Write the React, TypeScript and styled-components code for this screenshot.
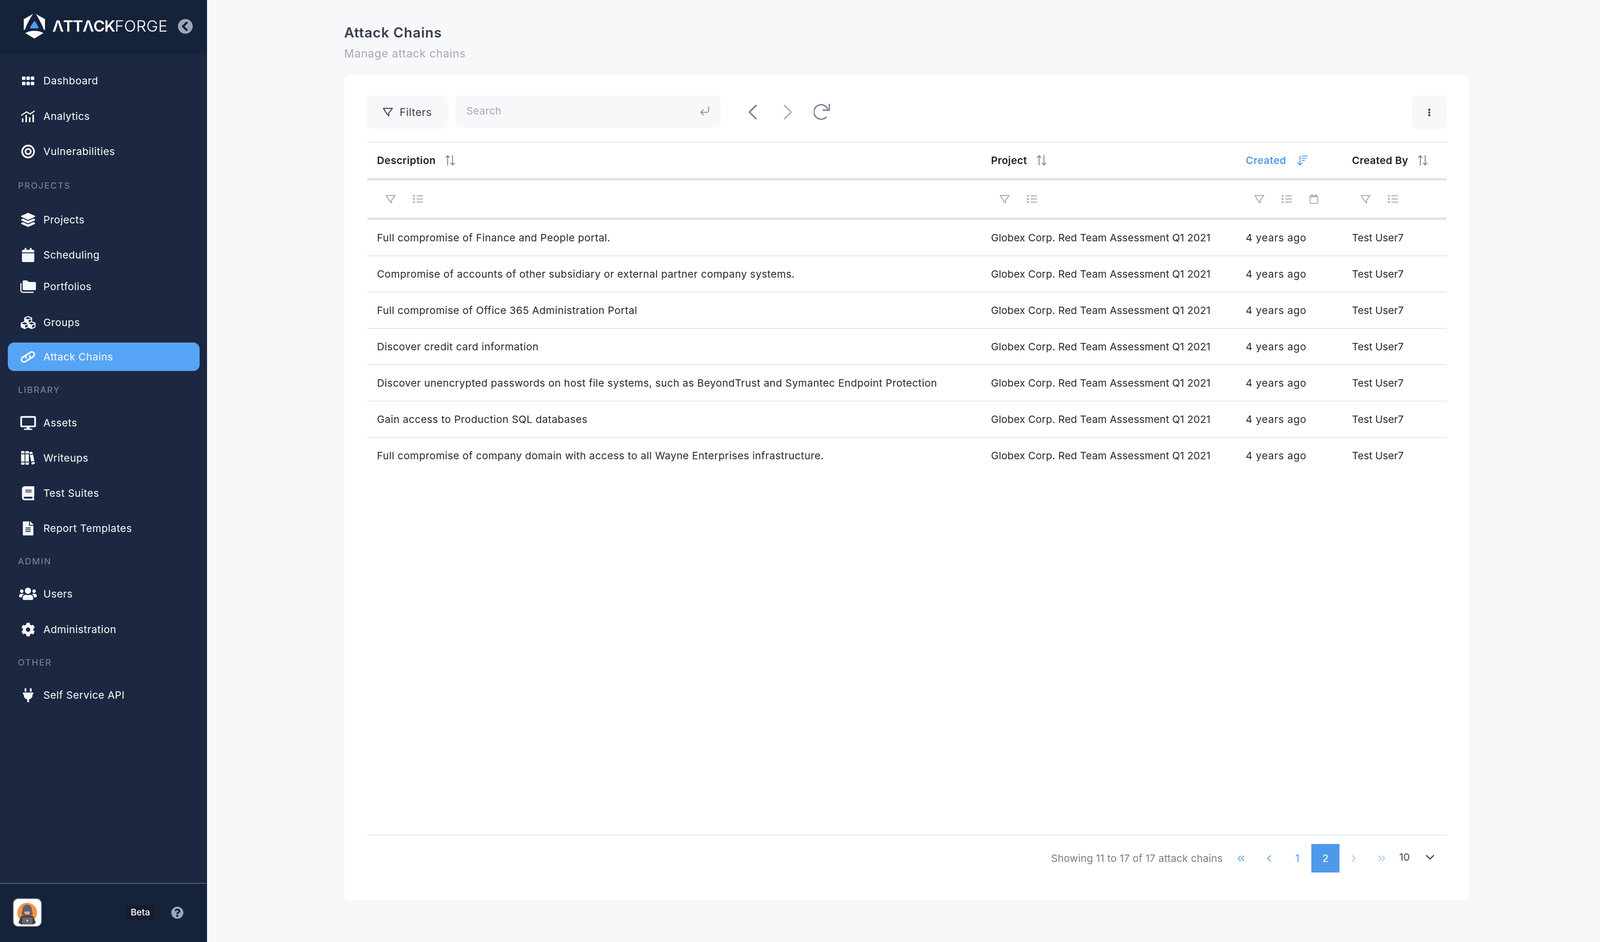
import React from 'react'
import styled, { createGlobalStyle } from 'styled-components'
import {
  FaBook,
  FaBullseye,
  FaCalendar,
  FaChevronCircleLeft,
  FaCog,
  FaCubes,
  FaDesktop,
  FaEllipsisV,
  FaFileAlt,
  FaGripHorizontal,
  FaLayerGroup,
  FaPlug,
  FaQuestionCircle,
  FaRegCalendar,
  FaUsers,
} from 'react-icons/fa'
import {
  FiChevronDown,
  FiChevronLeft,
  FiChevronRight,
  FiChevronsLeft,
  FiChevronsRight,
  FiCornerDownLeft,
} from 'react-icons/fi'
import { ArrowDownWideNarrow } from 'lucide-react'

const GlobalStyle = createGlobalStyle`
  html, body {
    margin: 0;
    background: #f7f8fa;
    font-family: Inter, "Liberation Sans", sans-serif;
  }
`

const COLUMNS = '1572px 652px 272px 267px'

const AnalyticsIcon = () => (
  <svg width="35" height="30" viewBox="0 0 35 30" fill="currentColor">
    <path d="M1 12 14 3.500 23 9 34 1.500" fill="none" stroke="currentColor" strokeWidth="3" strokeLinecap="round" strokeLinejoin="round" />
    <rect x="2" y="20" width="4" height="10" rx="1.500" />
    <rect x="11" y="11" width="4" height="19" rx="1.500" />
    <rect x="20" y="17" width="4" height="13" rx="1.500" />
    <rect x="29" y="10" width="4" height="20" rx="1.500" />
  </svg>
)

const FoldersIcon = () => (
  <svg width="40" height="32" viewBox="0 0 40 32" fill="currentColor">
    <path d="M1.500 8v17a5 5 0 0 0 5 5.500H33" fill="none" stroke="currentColor" strokeWidth="3" strokeLinecap="round" />
    <path d="M9 0h8l4.500 4H37a3 3 0 0 1 3 3v15a3 3 0 0 1-3 3H9a3 3 0 0 1-3-3V3a3 3 0 0 1 3-3z" />
  </svg>
)

const ChainIcon = () => (
  <svg width="41" height="32" viewBox="0 0 41 32" fill="none" stroke="currentColor" strokeWidth="4" strokeLinecap="round">
    <path d="M19 9 7 17c-7 5-1 15 7 11l9-6c3-2 4-6 2-9" />
    <path d="M22 23l12-8c7-5 1-15-7-11l-9 6c-3 2-4 6-2 9" />
  </svg>
)

const BooksIcon = () => (
  <svg width="35" height="35" viewBox="0 0 35 35" fill="currentColor">
    <path d="M0 2a2 2 0 0 1 2-2h5a2 2 0 0 1 2 2v4H0zM0 8h9v19H0zM0 29h9v4a2 2 0 0 1-2 2H2a2 2 0 0 1-2-2z" />
    <path d="M11 2a2 2 0 0 1 2-2h5a2 2 0 0 1 2 2v4h-9zM11 8h9v19h-9zM11 29h9v4a2 2 0 0 1-2 2h-5a2 2 0 0 1-2-2z" />
    <path d="M21 3l6-1.500a2 2 0 0 1 2 1.500l1 3.500-8 2zM22.500 10.500l8-2 3.500 17-8 2zM26.500 29.500l8-2 .5 3a2 2 0 0 1-1.500 2.500l-4.500 1.500a2 2 0 0 1-2.300-1.500z" />
  </svg>
)

const LogoMark = () => (
  <svg width="58" height="64" viewBox="0 0 167 192">
    <path fill="#fff" d="M73 2 2 42v85l10-6c14-40 36-82 61-119z" />
    <path fill="#fff" d="M95 2l70 40v85l-10-6C141 81 119 41 95 2z" />
    <path fill="#fff" d="M13 149c44-24 98-24 140 0l-68 41a4 4 0 0 1-4 0z" />
    <path fill="#4f9ff0" d="M78 62a8 8 0 0 1 13 0l22 38a8 8 0 0 1-7 13H60a8 8 0 0 1-7-13z" />
  </svg>
)

const AvatarArt = () => (
  <svg width="70" height="70" viewBox="0 0 70 70">
    <circle cx="34.500" cy="35" r="25.500" fill="#f0954d" />
    <path fill="#626265" d="M34.500 14c-8 0-12 7-12 13 0 5-3 8-2 12 1 3 7 5 14 5s13-2 14-5c1-4-2-7-2-12 0-6-4-13-12-13z" />
    <path fill="#f2a68a" d="M27 32h15c0 5-3 8-7.500 8S27 37 27 32z" />
    <path fill="#3f3f42" d="M20 43h29l3 6 5 12-6 3v1H18v-1l-6-3 5-12z" />
    <rect x="22" y="47" width="26" height="17" rx="1" fill="#69696c" />
    <circle cx="35" cy="55" r="2" fill="#fff" />
  </svg>
)

const FunnelIcon = () => (
  <svg width="26" height="22" viewBox="0 0 26 22" fill="none" stroke="currentColor" strokeWidth="2.500" strokeLinejoin="round">
    <path d="M1.500 1.500h23L15.500 13v7.500L10.500 16z" />
  </svg>
)

const ListIcon = () => (
  <svg width="26" height="21" viewBox="0 0 26 21" fill="currentColor" stroke="none">
    <circle cx="2.500" cy="2.500" r="2.500" />
    <circle cx="2.500" cy="10.500" r="2.500" />
    <circle cx="2.500" cy="18.500" r="2.500" />
    <rect x="9" y="1.250" width="17" height="2.500" rx="1" />
    <rect x="9" y="9.250" width="17" height="2.500" rx="1" />
    <rect x="9" y="17.250" width="17" height="2.500" rx="1" />
  </svg>
)

const SortArrows = () => (
  <svg width="24" height="27" viewBox="0 0 24 27" fill="none" stroke="currentColor" strokeWidth="2.200" strokeLinecap="round" strokeLinejoin="round">
    <path d="M6 26V2M1.500 6.500 6 1.500l4.500 5" />
    <path d="M18.500 1v24M14 20.500l4.500 5 4.500-5" />
  </svg>
)

const RefreshIcon = () => (
  <svg width="42" height="42" viewBox="0 0 42 42" fill="none" stroke="currentColor" strokeWidth="3.500" strokeLinecap="round" strokeLinejoin="round">
    <path d="M36 14A18.500 18.500 0 1 0 32 35" />
    <path d="M40 2v15H24" />
  </svg>
)

const navGroups = [
  {
    items: [
      { label: 'Dashboard', icon: <FaGripHorizontal size={36} />, gap: 0 },
      { label: 'Analytics', icon: <AnalyticsIcon />, gap: 18 },
      { label: 'Vulnerabilities', icon: <FaBullseye size={36} />, gap: 17 },
    ],
  },
  {
    title: 'PROJECTS',
    height: 102,
    items: [
      { label: 'Projects', icon: <FaLayerGroup size={36} />, gap: 0 },
      { label: 'Scheduling', icon: <FaCalendar size={36} />, gap: 17 },
      { label: 'Portfolios', icon: <FoldersIcon />, gap: 8 },
      { label: 'Groups', icon: <FaCubes size={38} />, gap: 19 },
      { label: 'Attack Chains', icon: <ChainIcon />, gap: 15, active: true },
    ],
  },
  {
    title: 'LIBRARY',
    height: 96,
    items: [
      { label: 'Assets', icon: <FaDesktop size={40} />, gap: 0 },
      { label: 'Writeups', icon: <BooksIcon />, gap: 17 },
      { label: 'Test Suites', icon: <FaBook size={36} />, gap: 17 },
      { label: 'Report Templates', icon: <FaFileAlt size={36} />, gap: 17 },
    ],
  },
  {
    title: 'ADMIN',
    height: 95,
    items: [
      { label: 'Users', icon: <FaUsers size={45} />, gap: 0 },
      { label: 'Administration', icon: <FaCog size={36} />, gap: 18 },
    ],
  },
  {
    title: 'OTHER',
    height: 95,
    items: [{ label: 'Self Service API', icon: <FaPlug size={36} />, gap: 0 }],
  },
]

const descriptions = [
  'Full compromise of Finance and People portal.',
  'Compromise of accounts of other subsidiary or external partner company systems.',
  'Full compromise of Office 365 Administration Portal',
  'Discover credit card information',
  'Discover unencrypted passwords on host file systems, such as BeyondTrust and Symantec Endpoint Protection',
  'Gain access to Production SQL databases',
  'Full compromise of company domain with access to all Wayne Enterprises infrastructure.',
]

export default function App() {
  return (
    <Page>
      <GlobalStyle />
      <Sidebar>
        <Brand>
          <LogoMark />
          <Wordmark aria-label="AttackForge">
            <strong>ΛTTΛCK</strong>FORGE
          </Wordmark>
          <Collapse>
            <FaChevronCircleLeft />
          </Collapse>
        </Brand>
        <Nav>
          {navGroups.map((group) => (
            <React.Fragment key={group.title || 'main'}>
              {group.title && <NavTitle $height={group.height}>{group.title}</NavTitle>}
              {group.items.map((item) => (
                <NavItem key={item.label} $gap={item.gap} $active={item.active}>
                  <NavIcon>{item.icon}</NavIcon>
                  {item.label}
                </NavItem>
              ))}
            </React.Fragment>
          ))}
        </Nav>
        <SideFooter>
          <Avatar>
            <AvatarArt />
          </Avatar>
          <Beta>Beta</Beta>
          <Help>
            <FaQuestionCircle />
          </Help>
        </SideFooter>
      </Sidebar>

      <Main>
        <Title>Attack Chains</Title>
        <Subtitle>Manage attack chains</Subtitle>
        <Card>
          <Toolbar>
            <FilterButton>
              <FunnelIcon />
              Filters
            </FilterButton>
            <Search>
              Search
              <FiCornerDownLeft />
            </Search>
            <Arrow $dim={false}>
              <FiChevronLeft />
            </Arrow>
            <Arrow $dim>
              <FiChevronRight />
            </Arrow>
            <Refresh>
              <RefreshIcon />
            </Refresh>
            <MenuButton>
              <FaEllipsisV />
            </MenuButton>
          </Toolbar>

          <Table>
            <HeadRow>
              <HeadCell>
                Description
                <SortIcon>
                  <SortArrows />
                </SortIcon>
              </HeadCell>
              <HeadCell>
                Project
                <SortIcon>
                  <SortArrows />
                </SortIcon>
              </HeadCell>
              <HeadCell $active>
                Created
                <SortIcon $active>
                  <ArrowDownWideNarrow />
                </SortIcon>
              </HeadCell>
              <HeadCell>
                Created By
                <SortIcon>
                  <SortArrows />
                </SortIcon>
              </HeadCell>
            </HeadRow>
            <FilterRow>
              {[false, false, true, false].map((hasDate, i) => (
                <FilterCell key={i}>
                  <FunnelIcon />
                  <ListIcon />
                  {hasDate && <FaRegCalendar />}
                </FilterCell>
              ))}
            </FilterRow>
            {descriptions.map((text) => (
              <Row key={text}>
                <Cell $tracking={0.62}>{text}</Cell>
                <Cell $tracking={0.25}>Globex Corp. Red Team Assessment Q1 2021</Cell>
                <Cell $tracking={0.95}>4 years ago</Cell>
                <Cell $tracking={0}>Test User7</Cell>
              </Row>
            ))}
          </Table>

          <Footer>
            <Showing>Showing 11 to 17 of 17 attack chains</Showing>
            <PageCell>
              <FiChevronsLeft />
            </PageCell>
            <PageCell>
              <FiChevronLeft />
            </PageCell>
            <PageCell>1</PageCell>
            <PageCell $current>2</PageCell>
            <PageCell $disabled>
              <FiChevronRight />
            </PageCell>
            <PageCell $disabled>
              <FiChevronsRight />
            </PageCell>
            <PageSize>
              10
              <FiChevronDown />
            </PageSize>
          </Footer>
        </Card>
      </Main>
    </Page>
  )
}

const Page = styled.div`
  display: flex;
  width: 4112px;
  height: 2412px;
  overflow: hidden;
  background: #f7f8fa;
`

const Sidebar = styled.aside`
  display: flex;
  flex-direction: column;
  flex: 0 0 530px;
  background: #1c2841;
  color: #f5f7fa;
`

const Brand = styled.div`
  display: flex;
  align-items: center;
  flex: 0 0 138px;
  padding: 0 36px 4px 59px;
  box-sizing: border-box;
  background: #15233a;
`

const Wordmark = styled.div`
  margin-left: 17px;
  font-size: 40px;
  line-height: 48px;
  font-weight: 300;
  letter-spacing: 0.6px;
  color: #fff;

  strong {
    font-weight: 600;
    letter-spacing: -1.5px;
  }
`

const Collapse = styled.span`
  display: flex;
  margin-left: auto;
  font-size: 39px;
  color: #a0a4b8;
`

const Nav = styled.nav`
  display: flex;
  flex-direction: column;
  flex: 1;
  padding-top: 32px;
`

const NavTitle = styled.div<{ $height?: number }>`
  display: flex;
  align-items: center;
  height: ${({ $height }) => $height}px;
  padding-left: 46px;
  font-size: 22px;
  letter-spacing: 2.5px;
  color: #80889c;
`

const NavItem = styled.a<{ $gap: number; $active?: boolean }>`
  display: flex;
  align-items: center;
  flex: 0 0 73px;
  margin: ${({ $gap }) => $gap}px 19px 0 20px;
  padding-left: 31px;
  border-radius: 16px;
  font-size: 26px;
  letter-spacing: 0.7px;
  background: ${({ $active }) => ($active ? '#55a4f5' : 'transparent')};
`

const NavIcon = styled.span`
  display: flex;
  align-items: center;
  justify-content: center;
  flex: 0 0 41px;
  min-width: 0;
  margin-right: 19px;

  svg {
    flex-shrink: 0;
  }
`

const SideFooter = styled.div`
  display: flex;
  align-items: center;
  flex: 0 0 151px;
  padding: 0 60px 2px 33px;
  box-sizing: border-box;
  border-top: 2px solid #5c6178;
  background: #15233a;
`

const Avatar = styled.div`
  display: flex;
  align-items: center;
  justify-content: center;
  width: 74px;
  height: 73px;
  box-sizing: border-box;
  border: 2px solid #7b8198;
  border-radius: 14px;
  background: #fff;
`

const Beta = styled.span`
  margin-left: auto;
  padding: 0 13px;
  border-radius: 14px;
  background: #191c30;
  font-size: 23px;
  font-weight: 500;
  line-height: 39px;
  color: #f5f7fa;
`

const Help = styled.span`
  display: flex;
  margin-left: 41px;
  font-size: 32px;
  color: #a0a4b8;
`

const Main = styled.main`
  display: flex;
  flex-direction: column;
  flex: 1;
  padding: 60px 352px 106px 351px;
  box-sizing: border-box;
`

const Title = styled.h1`
  margin: 0;
  font-size: 35px;
  font-weight: 600;
  line-height: 46px;
  letter-spacing: 1.2px;
  color: #3b3b50;
`

const Subtitle = styled.p`
  margin: 14px 0 0;
  font-size: 28px;
  line-height: 34px;
  letter-spacing: 1.1px;
  color: #a9a9bb;
`

const Card = styled.section`
  display: flex;
  flex-direction: column;
  flex: 1;
  margin-top: 38px;
  padding: 52px 57px 0 59px;
  border-radius: 18px;
  background: #fff;
`

const Toolbar = styled.div`
  display: flex;
  align-items: flex-start;
  height: 87px;
  margin-bottom: 32px;
`

const FilterButton = styled.button`
  display: flex;
  align-items: center;
  width: 206px;
  height: 86px;
  padding: 0 0 0 40px;
  border: none;
  border-radius: 14px;
  background: #f7f8fa;
  font: inherit;
  font-size: 27px;
  letter-spacing: 0.6px;
  color: #3f4254;

  svg {
    margin-right: 17px;
  }
`

const Search = styled.div`
  display: flex;
  align-items: center;
  justify-content: space-between;
  width: 679px;
  height: 83px;
  margin-left: 20px;
  padding: 0 26px 4px 28px;
  box-sizing: border-box;
  border-radius: 14px;
  background: #f7f8fa;
  font-size: 26px;
  letter-spacing: 0.6px;
  color: #a9a9bb;

  svg {
    width: 30px;
    height: 30px;
    color: #8e92a6;
  }
`

const Arrow = styled.span<{ $dim: boolean }>`
  display: flex;
  align-items: center;
  justify-content: center;
  width: 68px;
  height: 86px;
  margin-left: ${({ $dim }) => ($dim ? '22px' : '48px')};
  color: ${({ $dim }) => ($dim ? '#b1b2c2' : '#7e8199')};

  svg {
    width: 68px;
    height: 68px;
    stroke-width: 1.400;
  }
`

const Refresh = styled.span`
  display: flex;
  align-items: center;
  height: 84px;
  margin-left: 32px;
  color: #7e8199;
`

const MenuButton = styled.span`
  display: flex;
  align-items: center;
  justify-content: center;
  width: 88px;
  height: 87px;
  margin-left: auto;
  border-radius: 14px;
  background: #f7f8fa;
  font-size: 20px;
  color: #3f4254;
`

const Table = styled.div`
  flex: 1;
  border-top: 2px solid #e0e4e8;
`

const HeadRow = styled.div`
  display: grid;
  grid-template-columns: ${COLUMNS};
  height: 91px;
`

const HeadCell = styled.div<{ $active?: boolean }>`
  display: flex;
  align-items: center;
  padding-left: 25px;
  font-size: 26px;
  font-weight: 600;
  letter-spacing: 0.5px;
  color: ${({ $active }) => ($active ? '#4f9ff0' : '#22222a')};
`

const SortIcon = styled.span<{ $active?: boolean }>`
  display: flex;
  margin-left: 25px;
  color: ${({ $active }) => ($active ? '#4f9ff0' : '#7a808f')};

  svg.lucide {
    width: 34px;
    height: 34px;
    stroke-width: 1.700;
  }
`

const FilterRow = styled.div`
  display: grid;
  grid-template-columns: ${COLUMNS};
  height: 95px;
  box-sizing: content-box;
  border-top: 6px solid #dfe2e7;
  border-bottom: 6px solid #dfe2e7;
`

const FilterCell = styled.div`
  display: flex;
  align-items: center;
  gap: 44px;
  padding-left: 47px;
  color: #a9adbd;

  svg:nth-child(3) {
    width: 25px;
    height: 25px;
  }
`

const Row = styled.div`
  display: grid;
  grid-template-columns: ${COLUMNS};
  height: 91px;
  border-bottom: 2px solid #e0e4e8;

  &:last-child {
    border-bottom: none;
  }
`

const Cell = styled.div<{ $tracking: number }>`
  display: flex;
  align-items: center;
  padding-left: 25px;
  font-size: 26px;
  letter-spacing: ${({ $tracking }) => $tracking}px;
  color: #2b2b33;
  white-space: nowrap;
`

const Footer = styled.div`
  display: flex;
  align-items: center;
  height: 169px;
  padding: 0 0 50px 0;
  box-sizing: border-box;
  border-top: 2px solid #e0e4e8;
  justify-content: flex-end;
`

const Showing = styled.span`
  margin-right: 11px;
  font-size: 26px;
  letter-spacing: 0.17px;
  color: #80808f;
`

const PageCell = styled.span<{ $current?: boolean; $disabled?: boolean }>`
  display: flex;
  align-items: center;
  justify-content: center;
  width: 72px;
  height: 73px;
  font-size: 26px;
  background: ${({ $current }) => ($current ? '#4f9ae8' : 'transparent')};
  color: ${({ $current, $disabled }) =>
    $current ? '#fff' : $disabled ? '#93c1f5' : '#4f9ff0'};

  svg {
    width: 30px;
    height: 30px;
    stroke-width: 1.600;
  }
`

const PageSize = styled.span`
  display: flex;
  align-items: center;
  width: 130px;
  padding: 0 0 6px 9px;
  box-sizing: border-box;
  font-size: 26px;
  color: #3f4254;

  svg {
    width: 36px;
    height: 36px;
    margin-left: 34px;
  }
`
